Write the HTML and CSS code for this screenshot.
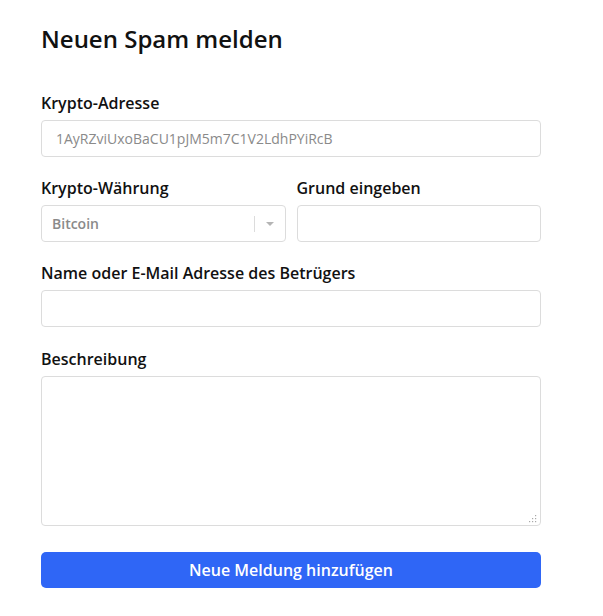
FILE: index.html
```html
<!DOCTYPE html>
<html lang="de">
<head>
<meta charset="utf-8">
<title>Neuen Spam melden</title>
<link rel="stylesheet" href="styles.css">
</head>
<body>
<div class="page">
  <h1 class="title">Neuen Spam melden</h1>
  <form class="form">
    <div class="group">
      <label class="label">Krypto-Adresse</label>
      <input class="input" type="text" placeholder="1AyRZviUxoBaCU1pJM5m7C1V2LdhPYiRcB">
    </div>
    <div class="row">
      <div class="group">
        <label class="label">Krypto-Währung</label>
        <div class="select">
          <span class="select-value">Bitcoin</span>
          <span class="select-sep"></span>
          <span class="select-arrow"></span>
        </div>
      </div>
      <div class="group">
        <label class="label">Grund eingeben</label>
        <input class="input" type="text">
      </div>
    </div>
    <div class="group">
      <label class="label">Name oder E-Mail Adresse des Betrügers</label>
      <input class="input" type="text">
    </div>
    <div class="group group-area">
      <label class="label">Beschreibung</label>
      <div class="textarea-wrap">
        <textarea class="textarea"></textarea>
        <svg class="grip" width="8" height="8" viewBox="0 0 8 8" aria-hidden="true">
          <rect x="6" y="0" width="1.2" height="1.2" fill="#a8a8a8"/>
          <rect x="3" y="3" width="1.2" height="1.2" fill="#a8a8a8"/>
          <rect x="6" y="3" width="1.2" height="1.2" fill="#a8a8a8"/>
          <rect x="0" y="6" width="1.2" height="1.2" fill="#a8a8a8"/>
          <rect x="3" y="6" width="1.2" height="1.2" fill="#a8a8a8"/>
          <rect x="6" y="6" width="1.2" height="1.2" fill="#a8a8a8"/>
        </svg>
      </div>
    </div>
    <button class="button" type="button">Neue Meldung hinzufügen</button>
  </form>
</div>
</body>
</html>
```
FILE: styles.css
```css
* { box-sizing: border-box; }
body {
  margin: 0;
  background: #fff;
  font-family: "Open Sans", "Noto Sans", sans-serif;
  color: #111;
}
.page {
  width: 500px;
  margin-left: 41px;
  padding-top: 22px;
}
.title {
  margin: 0;
  font-size: 24px;
  font-weight: 600;
  line-height: 34px;
  color: #111;
}
.form {
  margin-top: 36px;
  display: flex;
  flex-direction: column;
  gap: 20px;
}
.group {
  display: flex;
  flex-direction: column;
  gap: 6px;
  min-width: 0;
}
.group-area {
  margin-top: 1px;
}
.row {
  display: grid;
  grid-template-columns: 1fr 1fr;
  gap: 11px;
}
.label {
  font-size: 16px;
  font-weight: 600;
  line-height: 22px;
  color: #111;
}
.input, .select, .textarea {
  width: 100%;
  height: 37px;
  border: 1px solid #dcdcdc;
  border-radius: 4px;
  background: #fff;
  font-family: inherit;
  font-size: 14px;
  padding: 0 14px;
  color: #333;
  outline: none;
}
.input::placeholder { color: #8a8a8a; }
.select {
  display: flex;
  align-items: center;
  padding: 0 0 0 10px;
}
.select-value {
  flex: 1;
  color: #8a8a8a;
  font-weight: 600;
}
.select-sep {
  width: 1px;
  height: 16px;
  background: #dcdcdc;
}
.select-arrow {
  width: 30px;
  height: 16px;
  position: relative;
}
.select-arrow::after {
  content: "";
  position: absolute;
  left: 11px;
  top: 6px;
  border-left: 4px solid transparent;
  border-right: 4px solid transparent;
  border-top: 4px solid #b5b5b5;
}
.textarea-wrap {
  position: relative;
}
.textarea {
  height: 150px;
  resize: none;
  padding: 8px 14px;
  display: block;
}
.grip {
  position: absolute;
  right: 4px;
  bottom: 3px;
}
.button {
  margin-top: 6px;
  height: 36px;
  width: 100%;
  border: none;
  border-radius: 5px;
  background: #2f66f6;
  color: #fff;
  font-family: inherit;
  font-size: 16px;
  font-weight: 600;
}
```
